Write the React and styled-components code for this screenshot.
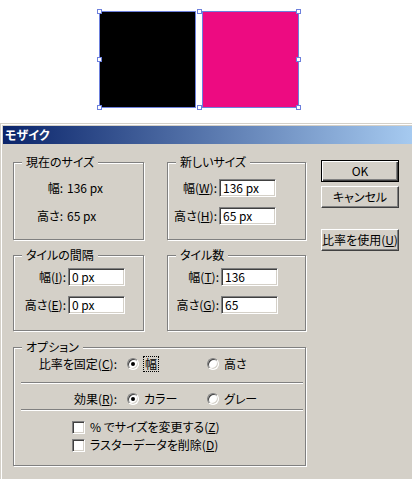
import React from 'react';
import styled, { createGlobalStyle, css } from 'styled-components';

const GlobalStyle = createGlobalStyle`
  html, body {
    margin: 0;
    background: #fff;
  }
  body {
    font-family: "Noto Sans CJK JP", "Noto Sans", sans-serif;
    font-size: 12px;
    line-height: 14px;
    font-feature-settings: "palt";
    color: #000;
  }
`;

const SEL = '#6d80dc';
const FACE = '#d4d0c8';

/* artboard with the two selected tiles */
const Canvas = styled.div`
  box-sizing: border-box;
  height: 123px;
  padding: 11px 0 0 99px;
`;

const Selection = styled.div`
  position: relative;
  display: flex;
  gap: 6px;
  width: max-content;
`;

const Shape = styled.div`
  box-sizing: border-box;
  width: 97px;
  height: 97px;
  border: 1px solid ${SEL};
  background: ${(p) => p.$fill};
`;

const Handle = styled.span`
  position: absolute;
  left: ${(p) => p.$x}px;
  top: ${(p) => p.$y}px;
  box-sizing: border-box;
  width: 5px;
  height: 5px;
  border: 1px solid ${SEL};
  background: #fff;
`;

/* dialog window */
const Dialog = styled.div`
  box-sizing: border-box;
  height: 356px;
  background: ${FACE};
  border-top: 1px solid ${FACE};
  border-left: 1px solid ${FACE};
  box-shadow: inset 1px 1px 0 #fff;
  padding: 2px 0 0 2px;
`;

const TitleBar = styled.div`
  height: 18px;
  padding-left: 2px;
  background: linear-gradient(to right, #0a246a, #a6caf0);
  color: #fff;
  font-weight: bold;
  line-height: 18px;
`;

const Client = styled.div`
  display: flex;
  align-items: flex-start;
  padding: 16px 0 0 10px;
`;

const MainColumn = styled.div`
  display: grid;
  grid-template-columns: 131px 139px;
  column-gap: 23px;
  row-gap: 15px;
  width: 293px;
  padding-top: 2px;
`;

const GroupBox = styled.div`
  position: relative;
  box-sizing: border-box;
  height: ${(p) => p.$h}px;
  border: 1px solid #808080;
  box-shadow: inset 1px 1px 0 #fff, 1px 1px 0 #fff;
  padding-top: ${(p) => p.$pt}px;
  ${(p) => p.$wide && css`
    grid-column: 1 / -1;
    margin-top: 1px;
  `}
`;

const Legend = styled.span`
  position: absolute;
  top: -8px;
  left: 8px;
  padding: 0 4px;
  background: ${FACE};
  line-height: 14px;
`;

const FieldGrid = styled.div`
  display: grid;
  grid-template-columns: ${(p) => p.$label}px auto;
  column-gap: ${(p) => p.$gap}px;
  row-gap: 10px;
  align-items: center;
`;

const Label = styled.span`
  text-align: right;
  white-space: nowrap;
`;

const Value = styled.span`
  height: 18px;
  line-height: 18px;
`;

const sunken = css`
  border: 1px solid;
  border-color: #808080 #fff #fff #808080;
  box-shadow: inset 1px 1px 0 #404040, inset -1px -1px 0 ${FACE};
  background: #fff;
`;

const TextBox = styled.div`
  ${sunken};
  box-sizing: border-box;
  width: 57px;
  height: 18px;
  padding-left: 3px;
  line-height: 16px;
`;

const OptionRow = styled.div`
  display: grid;
  grid-template-columns: 103px 70px 70px;
  column-gap: 10px;
  align-items: center;
  height: 16px;
  margin-top: ${(p) => p.$mt}px;
`;

const Choice = styled.span`
  display: flex;
  align-items: center;
  gap: 5px;
`;

const Radio = styled.span`
  ${sunken};
  position: relative;
  box-sizing: border-box;
  width: 12px;
  height: 12px;
  border-radius: 50%;

  ${(p) => p.$on && css`
    &::after {
      content: '';
      position: absolute;
      left: 3px;
      top: 3px;
      width: 4px;
      height: 4px;
      border-radius: 50%;
      background: #000;
    }
  `}
`;

const Focus = styled.span`
  outline: 1px dotted #000;
  outline-offset: 0;
  padding: 0 1px;
`;

const Separator = styled.div`
  margin: ${(p) => p.$mt}px 2px 0 7px;
  border-top: 1px solid #808080;
  border-bottom: 1px solid #fff;
`;

const CheckRow = styled.label`
  display: flex;
  align-items: center;
  gap: 5px;
  height: 16px;
  margin-top: ${(p) => p.$mt}px;
  padding-left: 58px;
`;

const CheckBox = styled.span`
  ${sunken};
  box-sizing: border-box;
  width: 13px;
  height: 13px;
`;

const ButtonColumn = styled.div`
  display: flex;
  flex-direction: column;
  margin-left: 15px;
`;

const Button = styled.button`
  box-sizing: border-box;
  width: 78px;
  height: 22px;
  margin-top: ${(p) => p.$mt || 0}px;
  padding: 0;
  background: ${FACE};
  font: inherit;
  color: #000;
  border: 1px solid;
  border-color: #fff #404040 #404040 #fff;
  box-shadow: inset -1px -1px 0 #808080;

  ${(p) => p.$primary && css`
    border: 1px solid #000;
    box-shadow: inset 1px 1px 0 #fff, inset -1px -1px 0 #404040, inset -2px -2px 0 #808080;
  `}
`;

const handles = [
  [-2, -2], [98, -2], [197, -2],
  [-2, 46], [197, 46],
  [-2, 94], [98, 94], [197, 94],
];

const Field = ({ label, value, box }) => (
  <>
    <Label>{label}</Label>
    {box ? <TextBox>{value}</TextBox> : <Value>{value}</Value>}
  </>
);

const App = () => (
  <>
    <GlobalStyle />
    <Canvas>
      <Selection>
        <Shape $fill="#000" />
        <Shape $fill="#ed0b81" />
        {handles.map(([x, y], i) => (
          <Handle key={i} $x={x} $y={y} />
        ))}
      </Selection>
    </Canvas>

    <Dialog>
      <TitleBar>モザイク</TitleBar>
      <Client>
        <MainColumn>
          <GroupBox $h={78} $pt={16}>
            <Legend>現在のサイズ</Legend>
            <FieldGrid $label={49} $gap={4}>
              <Field label="幅:" value="136 px" />
              <Field label="高さ:" value="65 px" />
            </FieldGrid>
          </GroupBox>

          <GroupBox $h={78} $pt={16}>
            <Legend>新しいサイズ</Legend>
            <FieldGrid $label={49} $gap={2}>
              <Field box label={<>幅(<u>W</u>):</>} value="136 px" />
              <Field box label={<>高さ(<u>H</u>):</>} value="65 px" />
            </FieldGrid>
          </GroupBox>

          <GroupBox $h={76} $pt={12}>
            <Legend>タイルの間隔</Legend>
            <FieldGrid $label={52} $gap={2}>
              <Field box label={<>幅(<u>I</u>):</>} value="0 px" />
              <Field box label={<>高さ(<u>E</u>):</>} value="0 px" />
            </FieldGrid>
          </GroupBox>

          <GroupBox $h={76} $pt={12}>
            <Legend>タイル数</Legend>
            <FieldGrid $label={51} $gap={2}>
              <Field box label={<>幅(<u>T</u>):</>} value="136" />
              <Field box label={<>高さ(<u>G</u>):</>} value="65" />
            </FieldGrid>
          </GroupBox>

          <GroupBox $wide $h={119} $pt={0}>
            <Legend>オプション</Legend>
            <OptionRow $mt={8}>
              <Label>比率を固定(<u>C</u>):</Label>
              <Choice><Radio $on /><Focus>幅</Focus></Choice>
              <Choice><Radio />高さ</Choice>
            </OptionRow>
            <Separator $mt={10} />
            <OptionRow $mt={7}>
              <Label>効果(<u>R</u>):</Label>
              <Choice><Radio $on />カラー</Choice>
              <Choice><Radio />グレー</Choice>
            </OptionRow>
            <Separator $mt={2} />
            <CheckRow $mt={8}>
              <CheckBox />
              <span>% でサイズを変更する(<u>Z</u>)</span>
            </CheckRow>
            <CheckRow $mt={2}>
              <CheckBox />
              <span>ラスターデータを削除(<u>D</u>)</span>
            </CheckRow>
          </GroupBox>
        </MainColumn>

        <ButtonColumn>
          <Button $primary>OK</Button>
          <Button $mt={4}>キャンセル</Button>
          <Button $mt={21}>比率を使用(<u>U</u>)</Button>
        </ButtonColumn>
      </Client>
    </Dialog>
  </>
);

export default App;
